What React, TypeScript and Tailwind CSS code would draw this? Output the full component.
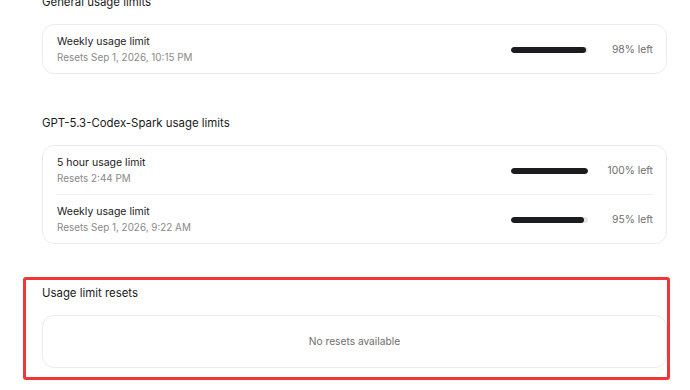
import React from "react"

type Limit = { title: string; resets: string; left: number }

const sections: { heading: string; limits: Limit[] }[] = [
  {
    heading: "General usage limits",
    limits: [{ title: "Weekly usage limit", resets: "Resets Sep 1, 2026, 10:15 PM", left: 98 }],
  },
  {
    heading: "GPT-5.3-Codex-Spark usage limits",
    limits: [
      { title: "5 hour usage limit", resets: "Resets 2:44 PM", left: 100 },
      { title: "Weekly usage limit", resets: "Resets Sep 1, 2026, 9:22 AM", left: 95 },
    ],
  },
]

function UsageBar({ left }: { left: number }) {
  return (
    <div className="h-[6px] w-[77px] overflow-hidden rounded-full bg-[#e6e6e6]">
      <div className="h-full rounded-full bg-[#1b1c1f]" style={{ width: `${left}%` }} />
    </div>
  )
}

function LimitRow({ limit, divider }: { limit: Limit; divider: boolean }) {
  return (
    <div className="pl-[14px] pr-[13px]">
      <div className={`flex items-center pt-[9px] pb-[8px] ${divider ? "border-b border-[#f0f0f0]" : ""}`}>
        <div className="flex-1">
          <div className="text-[10.5px] leading-[16px] text-[#1a1a1a]">{limit.title}</div>
          <div className="text-[9.9px] leading-[15px] text-[#8a8a8a]">{limit.resets}</div>
        </div>
        <UsageBar left={limit.left} />
        <div className="w-[65px] text-right text-[10.3px] text-[#6e6e6e]">{limit.left}% left</div>
      </div>
    </div>
  )
}

function SectionHeading({ children }: { children: React.ReactNode }) {
  return <h2 className="mb-[14px] text-[11.4px] leading-[16px] text-[#1a1a1a]">{children}</h2>
}

export default function App() {
  return (
    <div
      className="relative h-[390px] w-[690px] overflow-hidden bg-white"
      style={{ fontFamily: "Inter, 'Liberation Sans', sans-serif" }}
    >
      <div className="mt-[-6px] ml-[42px] flex w-[625px] flex-col gap-[41px]">
        {sections.map((s) => (
          <section key={s.heading}>
            <SectionHeading>{s.heading}</SectionHeading>
            <div className="rounded-[12px] border border-[#ececec] bg-white">
              {s.limits.map((l, i) => (
                <LimitRow key={l.title + i} limit={l} divider={i < s.limits.length - 1} />
              ))}
            </div>
          </section>
        ))}
        <section>
          <SectionHeading>Usage limit resets</SectionHeading>
          <div className="flex h-[53px] items-center justify-center rounded-[12px] border border-[#ececec] text-[10.2px] text-[#6e6e6e]">
            No resets available
          </div>
        </section>
      </div>
      {/* annotation highlight */}
      <div className="pointer-events-none absolute top-[277px] left-[23px] h-[103px] w-[647px] rounded-[3px] border-[3px] border-[#f23535]" />
    </div>
  )
}
